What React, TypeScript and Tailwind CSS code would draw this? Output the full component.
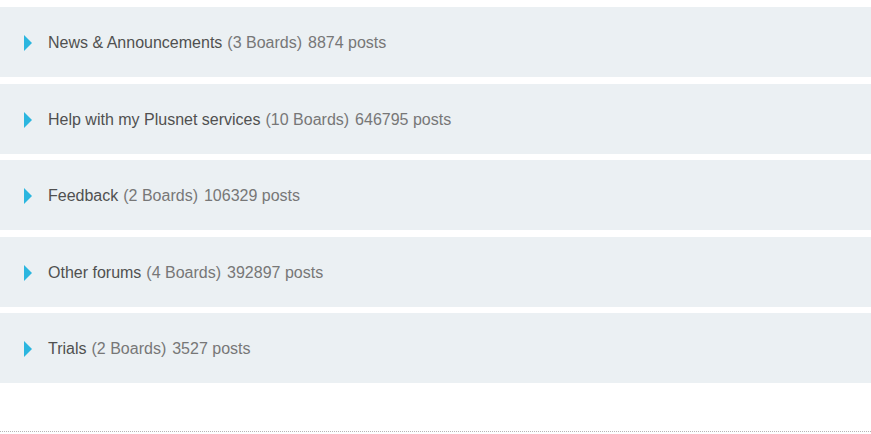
import React from "react";

const categories = [
  { title: "News & Announcements", boards: 3, posts: 8874 },
  { title: "Help with my Plusnet services", boards: 10, posts: 646795 },
  { title: "Feedback", boards: 2, posts: 106329 },
  { title: "Other forums", boards: 4, posts: 392897 },
  { title: "Trials", boards: 2, posts: 3527 },
];

export default function App() {
  return (
    <div className="w-[871px] h-[434px] bg-white font-['Liberation_Sans',Arial,sans-serif] overflow-hidden">
      <div className="pt-[7px] flex flex-col gap-[6.5px]">
        {categories.map((cat) => (
          <div
            key={cat.title}
            className="h-[70px] bg-[#ebf0f3] flex items-center pl-6 pt-[2px] text-[16px]"
          >
            {/* caret */}
            <span className="w-0 h-0 border-y-[8px] border-y-transparent border-l-[8px] border-l-[#2bb6df] mr-4" />
            <span className="text-[#505050]">{cat.title}</span>
            <span className="ml-[5px] text-[#777777]">({cat.boards} Boards)</span>
            <span className="ml-[6px] text-[#777777]">{cat.posts} posts</span>
          </div>
        ))}
      </div>
      <div className="mt-[48px] border-b border-dotted border-[#b5b5b5]" />
    </div>
  );
}
